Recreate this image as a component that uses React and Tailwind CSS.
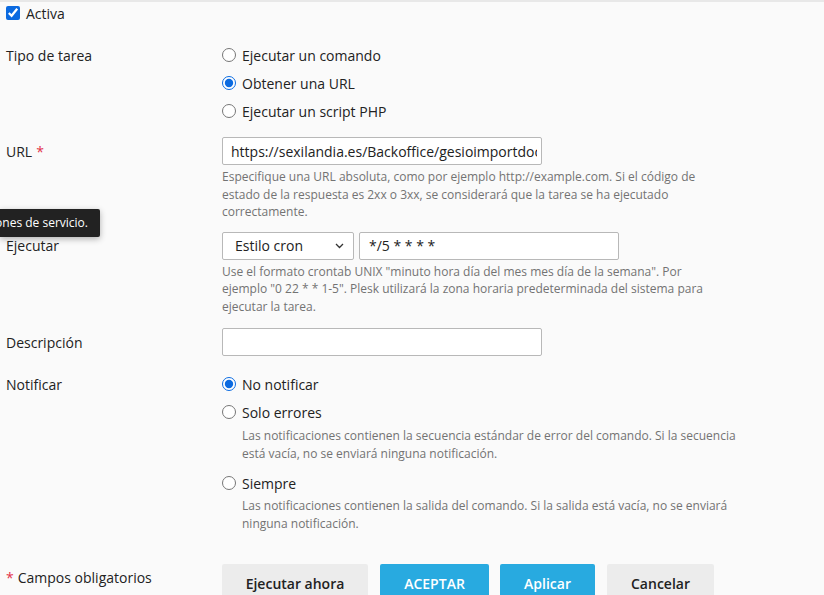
import React from 'react';

const Label = ({ children, h = 'h-[28px]', required }) => (
    <div className={`w-[216px] shrink-0 ${h} flex items-center`}>
        {children}
        {required && <span className="text-[#e2324a] ml-[4px]">*</span>}
    </div>
);

const Radio = ({ label, checked, name }) => (
    <label className="h-[28px] flex items-center gap-[6px]">
        <input type="radio" defaultChecked={checked} name={name} className="m-0 w-[14px] h-[14px] accent-[#0b6ae0]" />
        <span>{label}</span>
    </label>
);

const Hint = ({ children, className = '' }) => (
    <p className={`text-[12px] leading-[17.5px] text-[#737373] ${className}`}>{children}</p>
);

const App = () => {
    return (
        <div className="relative min-h-screen bg-[#fafafa] border-t-2 border-[#e8e8e8] text-[14px] text-[#222] pl-[6px]" style={{ fontFamily: '"Open Sans", sans-serif' }}>
            <label className="h-[22px] flex items-center gap-[6px]">
                <input type="checkbox" defaultChecked className="m-0 w-[14px] h-[14px] accent-[#0b6ae0]" />
                <span>Activa</span>
            </label>

            <div className="flex mt-[17px]">
                <Label>Tipo de tarea</Label>
                <div>
                    <Radio name="tipo" label="Ejecutar un comando" />
                    <Radio name="tipo" label="Obtener una URL" checked />
                    <Radio name="tipo" label="Ejecutar un script PHP" />
                </div>
            </div>

            <div className="flex mt-[12px]">
                <Label required>URL</Label>
                <div>
                    <input
                        type="text"
                        defaultValue="https://sexilandia.es/Backoffice/gesioimportdocument"
                        className="w-[320px] h-[28px] bg-white border border-[#b8b8b8] rounded-[2px] pl-[8px] pr-[4px] outline-none"
                    />
                    <Hint className="mt-[3px]">
                        Especifique una URL absoluta, como por ejemplo http://example.com. Si el código de<br />
                        estado de la respuesta es 2xx o 3xx, se considerará que la tarea se ha ejecutado<br />
                        correctamente.
                    </Hint>
                </div>
            </div>

            <div className="flex mt-[11px]">
                <Label>Ejecutar</Label>
                <div>
                    <div className="flex gap-[5px]">
                        <div className="w-[132px] h-[28px] bg-white border border-[#b8b8b8] rounded-[2px] pl-[12px] pr-[9px] flex items-center justify-between">
                            <span>Estilo cron</span>
                            <svg width="9" height="6" viewBox="0 0 9 6" fill="none" stroke="#333" strokeWidth="1.3">
                                <path d="M1 1l3.5 3.5L8 1" />
                            </svg>
                        </div>
                        <input
                            type="text"
                            defaultValue="*/5 * * * *"
                            className="w-[260px] h-[28px] bg-white border border-[#b8b8b8] rounded-[2px] pl-[9px] outline-none"
                        />
                    </div>
                    <Hint className="mt-[3px]">
                        Use el formato crontab UNIX "minuto hora día del mes mes día de la semana". Por<br />
                        ejemplo "0 22 * * 1-5". Plesk utilizará la zona horaria predeterminada del sistema para<br />
                        ejecutar la tarea.
                    </Hint>
                </div>
            </div>

            <div className="flex mt-[13px]">
                <Label>Descripción</Label>
                <input type="text" className="w-[320px] h-[28px] bg-white border border-[#b8b8b8] rounded-[2px] outline-none" />
            </div>

            <div className="flex mt-[14px]">
                <Label>Notificar</Label>
                <div>
                    <Radio name="notif" label="No notificar" checked />
                    <Radio name="notif" label="Solo errores" />
                    <Hint className="ml-[20px] mt-[1px]">
                        Las notificaciones contienen la secuencia estándar de error del comando. Si la secuencia<br />
                        está vacía, no se enviará ninguna notificación.
                    </Hint>
                    <div className="mt-[7px]">
                        <Radio name="notif" label="Siempre" />
                    </div>
                    <Hint className="ml-[20px]">
                        Las notificaciones contienen la salida del comando. Si la salida está vacía, no se enviará<br />
                        ninguna notificación.
                    </Hint>
                </div>
            </div>

            <div className="flex mt-[32px]">
                <div className="w-[216px] shrink-0 pt-[4px] leading-[20px]">
                    <span className="text-[#e2324a] mr-[4px]">*</span>Campos obligatorios
                </div>
                <div className="flex font-semibold">
                    <button className="w-[146px] h-[38px] bg-[#ececec] rounded-[2px] text-[#222]">Ejecutar ahora</button>
                    <button className="ml-[12px] w-[109px] h-[38px] bg-[#28aae0] rounded-[2px] text-white">ACEPTAR</button>
                    <button className="ml-[11px] w-[95px] h-[38px] bg-[#28aae0] rounded-[2px] text-white">Aplicar</button>
                    <button className="ml-[12px] w-[107px] h-[38px] bg-[#ececec] rounded-[2px] text-[#222]">Cancelar</button>
                </div>
            </div>

            <div className="absolute left-0 top-[207px] w-[100px] h-[28px] bg-[#222] rounded-r-[2px] shadow-[0_2px_6px_rgba(0,0,0,0.3)] text-white text-[12px] flex items-center justify-end pr-[12px] whitespace-nowrap overflow-hidden">
                ones de servicio.
            </div>
        </div>
    );
};

export default App;
